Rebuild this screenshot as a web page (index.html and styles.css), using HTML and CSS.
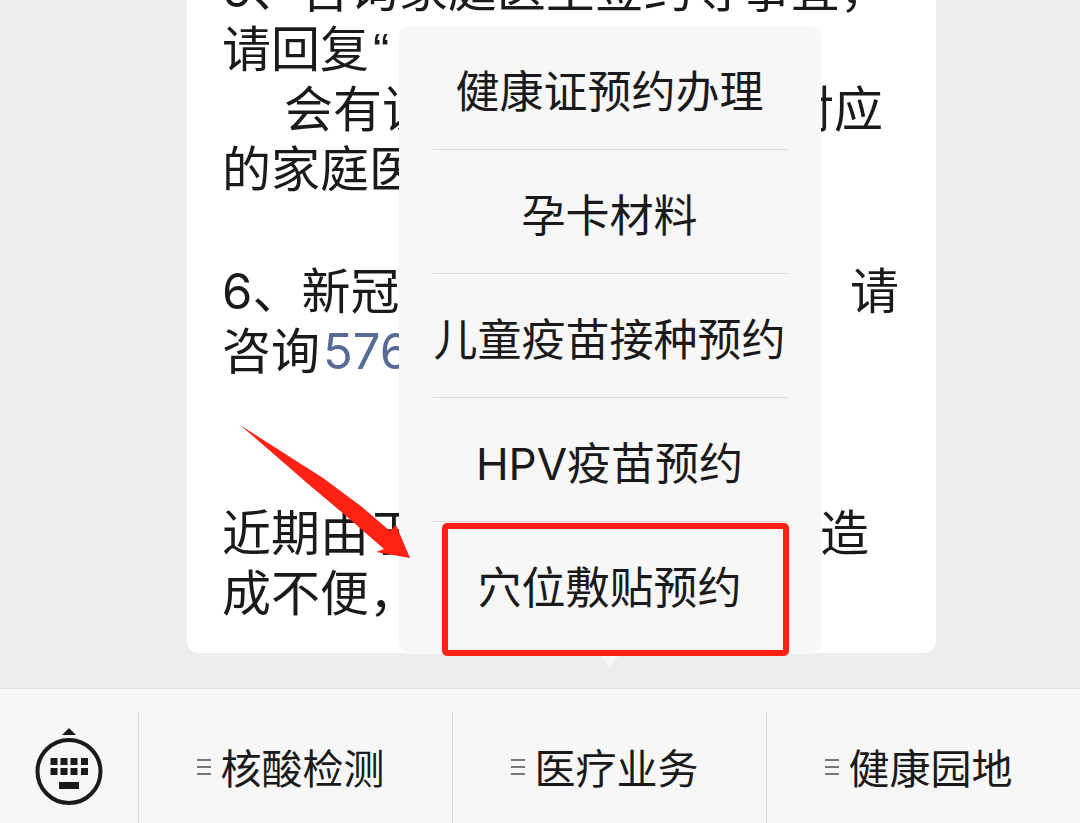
FILE: index.html
```
<!DOCTYPE html>
<html lang="zh-CN">
<head>
<meta charset="utf-8">
<meta name="viewport" content="width=device-width, initial-scale=1">
<title>公众号</title>
<link rel="stylesheet" href="styles.css">
</head>
<body>
<main class="chat">
  <div class="message">
    <p>
      <span class="line">5、咨询家庭医生签约等事宜，</span>
      <span class="line">请回复<span class="quote">“</span></span>
      <span class="line indent">会有该<span class="tail tail-middle">对应</span></span>
      <span class="line">的家庭医</span>
    </p>
    <p>
      <span class="line">6、新冠<span class="tail">请</span></span>
      <span class="line">咨询<a href="tel:576">576</a></span>
    </p>
    <p class="notice">
      <span class="line">近期由于<span class="tail tail-short">造</span></span>
      <span class="line">成不便，</span>
    </p>
  </div>
</main>

<nav class="bar">
  <button class="keyboard" aria-label="键盘">
    <svg width="70" height="80" viewBox="0 0 70 80">
      <path d="M28 8 35 1l7 7z" fill="#1a1a1a"/>
      <circle cx="35" cy="44.500" r="31.500" fill="none" stroke="#1a1a1a" stroke-width="4"/>
      <g fill="#1a1a1a">
        <path d="M16.500 31h7v7h-7zM26.500 31h7v7h-7zM36.500 31h7v7h-7zM47 31h7v7h-7z"/>
        <path d="M16.500 41h7v7h-7zM26.500 41h7v7h-7zM36.500 41h7v7h-7zM47 41h7v7h-7z"/>
        <path d="M25 55h20v7H25z"/>
      </g>
    </svg>
  </button>
  <div class="cell">
    <button class="tab"><svg class="lines" width="14" height="18" viewBox="0 0 14 18"><path d="M0 3h14M0 10h14M0 17h14"/></svg>核酸检测</button>
  </div>
  <div class="cell">
    <button class="tab"><svg class="lines" width="14" height="18" viewBox="0 0 14 18"><path d="M0 3h14M0 10h14M0 17h14"/></svg>医疗业务</button>
    <div class="popup">
      <button class="item">健康证预约办理</button>
      <button class="item">孕卡材料</button>
      <button class="item">儿童疫苗接种预约</button>
      <button class="item">HPV疫苗预约</button>
      <button class="item">穴位敷贴预约</button>
      <div class="highlight"></div>
      <svg class="arrow" width="172" height="136" viewBox="0 0 172 136">
        <path d="M1 1 84 54 123 83 151 107 157 101 171 134 137 128 145 125 106 91 68 59z" fill="#ff2114"/>
      </svg>
    </div>
  </div>
  <div class="cell">
    <button class="tab"><svg class="lines" width="14" height="18" viewBox="0 0 14 18"><path d="M0 3h14M0 10h14M0 17h14"/></svg>健康园地</button>
  </div>
</nav>
</body>
</html>
```
FILE: styles.css
```
* {
  box-sizing: border-box;
  margin: 0;
  padding: 0;
}

body {
  display: flex;
  flex-direction: column;
  height: 100vh;
  overflow: hidden;
  background: #ededeb;
  color: #1a1a1a;
  font-family: Inter, "Noto Sans CJK SC", sans-serif;
}

button {
  border: 0;
  background: none;
  color: inherit;
  font-family: inherit;
}

.chat {
  flex: 1;
  min-height: 0;
  display: flex;
  flex-direction: column;
  justify-content: flex-end;
  padding: 0 144px 35px 187px;
}

.message {
  flex-shrink: 0;
  padding: 28px 37px 29px 35px;
  border-radius: 12px;
  background: #fff;
  font-size: 49px;
  line-height: 60px;
}

.message p + p {
  margin-top: 62px;
}

.message p.notice {
  margin-top: 122px;
}

.message a {
  margin-left: 3px;
  color: #576b95;
  text-decoration: none;
}

.line {
  display: flex;
  white-space: nowrap;
}

.indent {
  padding-left: 62px;
}

.quote {
  margin-left: 4px;
  font-family: "Liberation Sans", sans-serif;
}

.tail {
  margin-left: auto;
}

.tail-middle {
  margin-right: 16px;
}

.tail-short {
  margin-right: 30px;
}

.bar {
  display: flex;
  height: 135px;
  padding-top: 22px;
  border-top: 1px solid #e2e2e2;
  background: #f7f7f7;
}

.keyboard {
  width: 138px;
}

.keyboard svg {
  display: block;
  margin: 0 auto;
}

.cell {
  position: relative;
  flex: 1;
  border-left: 1px solid #dcdcdc;
}

.tab {
  display: flex;
  align-items: center;
  justify-content: center;
  gap: 10px;
  width: 100%;
  height: 100%;
  padding: 0 10px 2px 0;
  font-size: 41px;
}

.lines {
  fill: none;
  stroke: #777;
  stroke-width: 2;
}

.popup {
  position: absolute;
  left: 50%;
  bottom: calc(100% + 57px);
  width: 422px;
  padding: 0 34px 8px;
  border-radius: 12px;
  background: #f7f7f7;
  transform: translateX(-50%);
}

/* little pointer towards the tab */
.popup::before {
  content: "";
  position: absolute;
  top: 100%;
  left: 50%;
  margin-left: -10px;
  border: 10px solid transparent;
  border-top: 14px solid #f7f7f7;
  border-bottom: 0;
}

.item {
  display: block;
  width: 100%;
  height: 124px;
  padding-top: 2px;
  border-bottom: 1px solid #dcdcdc;
  font-size: 44px;
  white-space: nowrap;
}

.item:nth-child(5) {
  border-bottom: 0;
}

.highlight {
  position: absolute;
  left: 43px;
  right: 32px;
  bottom: -2px;
  height: 133px;
  border: 6px solid #ff2114;
  border-radius: 5px;
  pointer-events: none;
}

.arrow {
  position: absolute;
  left: -160px;
  bottom: 94px;
  pointer-events: none;
}
```
